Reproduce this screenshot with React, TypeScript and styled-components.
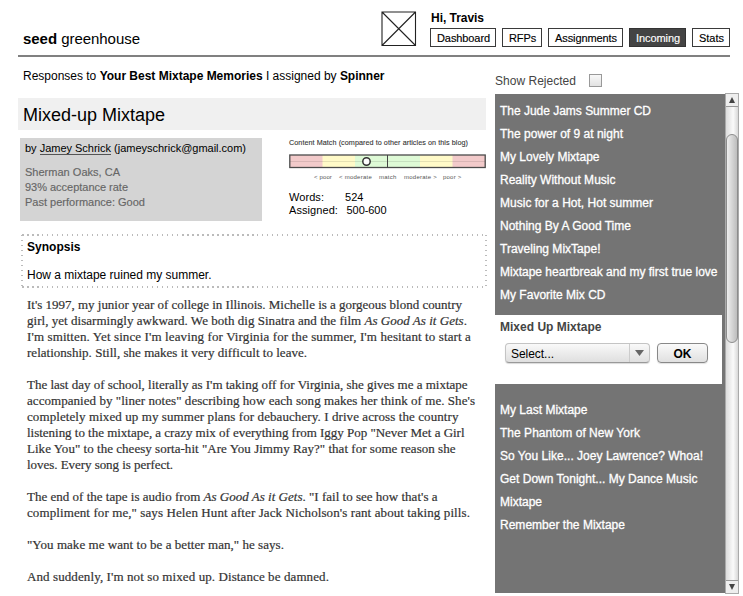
import React, { useLayoutEffect, useRef, useState } from "react";
import styled, { createGlobalStyle, css } from "styled-components";

const GlobalStyle = createGlobalStyle`
  * { box-sizing: border-box; }
  body { margin: 0; background: #fff; overflow: hidden; }
`;

const Page = styled.div`
  width: 743px;
  height: 596px;
  overflow: hidden;
  background: #fff;
  color: #000;
  font-family: "Liberation Sans", Arial, sans-serif;
  font-size: 12px;
  line-height: 16px;
  white-space: nowrap;
`;

const FitSpan = styled.span`
  display: inline-block;
  white-space: pre;
`;

/* Tracks a run of text so that it fills the given measure. */
function Fit({ w, children }: { w: number; children: React.ReactNode }) {
  const ref = useRef<HTMLSpanElement>(null);
  const [spacing, setSpacing] = useState(0);
  useLayoutEffect(() => {
    const el = ref.current;
    if (!el) return;
    const count = (el.textContent || "").length;
    el.style.letterSpacing = "0px";
    const next = (w - el.getBoundingClientRect().width) / Math.max(1, count);
    el.style.letterSpacing = `${next}px`;
    setSpacing(next);
  }, [w, children]);
  return (
    <FitSpan ref={ref} style={{ letterSpacing: spacing }}>
      {children}
    </FitSpan>
  );
}

const Header = styled.header`
  display: flex;
  width: 712px;
  height: 57px;
  margin-left: 18px;
  border-bottom: 2px solid #808080;
`;

const Logo = styled.h1`
  width: 363px;
  margin: 0;
  padding: 29px 0 0 5px;
  font-size: 15px;
  font-weight: 400;
  line-height: 20px;
`;

const Avatar = styled.svg`
  display: block;
  width: 36px;
  height: 36px;
  margin-top: 11px;
  flex: none;
`;

const Account = styled.div`
  margin-left: 13px;
  padding-top: 10px;
`;

const Greeting = styled.div`
  height: 18px;
  padding-left: 1px;
  font-weight: 700;
`;

const Nav = styled.nav`
  display: flex;
  gap: 6px;
`;

const NavButton = styled.button<{ $w: number; $active?: boolean }>`
  width: ${(p) => p.$w}px;
  height: 19px;
  padding: 0 0 0 1px;
  border: 1.5px solid ${(p) => (p.$active ? "#333" : "#3a3a3a")};
  background: ${(p) => (p.$active ? "#444" : "#fff")};
  color: ${(p) => (p.$active ? "#fff" : "#000")};
  font: 11px/16px "Liberation Sans", Arial, sans-serif;
  -webkit-text-stroke: 0.15px currentColor;
  white-space: nowrap;
  text-align: center;
`;

const Columns = styled.div`
  display: flex;
`;

const Main = styled.main`
  width: 495px;
`;

const Intro = styled.p`
  height: 41px;
  margin: 0;
  padding: 11px 0 0 23px;
`;

const TitleBar = styled.h2`
  width: 468px;
  height: 32px;
  margin: 0 0 0 18px;
  padding-left: 5px;
  background: #f0f0f0;
  font-size: 18px;
  font-weight: 400;
  line-height: 34px;
`;

const Details = styled.div`
  display: flex;
  height: 83px;
  margin: 8px 0 0 20px;
`;

const Author = styled.section`
  width: 242px;
  height: 83px;
  padding: 3px 0 0 5px;
  background: #d4d4d4;
  font-size: 11px;
  line-height: 15px;
`;

const Name = styled.a`
  border-bottom: 1px solid #555;
  display: inline-block;
  line-height: 12px;
`;

const Facts = styled.div`
  margin-top: 9px;
  color: #666;
  -webkit-text-stroke: 0.15px #666;
`;

const Match = styled.section`
  width: 198px;
  margin-left: 27px;
  font-size: 11px;
  line-height: 13px;
`;

const MatchTitle = styled.div`
  height: 16px;
  font-size: 7.2px;
  line-height: 9px;
  color: #333;
  -webkit-text-stroke: 0.1px #333;
`;

const Meter = styled.svg`
  display: block;
  width: 198px;
  height: 15px;
`;

const Scale = styled.div`
  display: grid;
  grid-template-columns: 25px 40px 25px 39px 24px;
  justify-items: start;
  height: 22px;
  padding: 4px 0 0 25px;
  font-size: 6px;
  line-height: 8px;
  color: #555;
`;

const Count = styled.div<{ $label: number }>`
  display: grid;
  grid-template-columns: ${(p) => p.$label}px auto;
`;

const dots = css`
  background:
    repeating-linear-gradient(90deg, #bbb 0 1.5px, transparent 1.5px 5px) 1px 0 / 100% 2px no-repeat,
    repeating-linear-gradient(90deg, #bbb 0 1.5px, transparent 1.5px 5px) 1px 100% / 100% 2px no-repeat,
    repeating-linear-gradient(180deg, #bbb 0 1.5px, transparent 1.5px 5px) 0 1px / 2px 100% no-repeat,
    repeating-linear-gradient(180deg, #bbb 0 1.5px, transparent 1.5px 5px) 100% 1px / 2px 100% no-repeat;
`;

const Synopsis = styled.section`
  ${dots}
  width: 466px;
  height: 54px;
  margin: 13px 0 0 21px;
  padding: 5px 0 0 6px;
`;

const SynopsisTitle = styled.h3`
  margin: 0 0 12px;
  font-size: 12px;
  line-height: 16px;
`;

const Article = styled.article`
  padding: 9px 0 0 27px;
  font-family: "Liberation Serif", "Times New Roman", serif;
  font-size: 13px;
  line-height: 16px;
  color: #333;
  -webkit-text-stroke: 0.2px #333;
`;

const Paragraph = styled.p`
  margin: 0 0 16px;
`;

const Line = styled.span`
  display: block;
  height: 16px;
`;

const Side = styled.aside`
  width: 248px;
`;

const Filter = styled.label`
  display: flex;
  align-items: flex-start;
  height: 36px;
  padding-top: 16px;
  gap: 13px;
  color: #444;
`;

const Check = styled.span`
  width: 13px;
  height: 13px;
  margin-top: 1px;
  border: 1px solid #999;
  background: linear-gradient(#f8f8f8, #e2e2e2);
`;

const Panel = styled.div`
  display: flex;
`;

const List = styled.div`
  width: 230px;
  height: 499px;
  margin-top: 1px;
  background: #747474;
`;

const Items = styled.ul<{ $h: number; $top: number }>`
  height: ${(p) => p.$h}px;
  margin: 0;
  padding: ${(p) => p.$top}px 0 0 5px;
  list-style: none;
  color: #fff;
  -webkit-text-stroke: 0.3px #fff;
`;

const Item = styled.li`
  height: 23px;
  line-height: 22px;
`;

const Current = styled.section`
  width: 227px;
  height: 69px;
  padding: 4px 0 0 5px;
  background: #fff;
`;

const CurrentTitle = styled.h4`
  margin: 0 0 8px;
  font-size: 12px;
  line-height: 16px;
  color: #444;
`;

const Controls = styled.div`
  display: flex;
  gap: 7px;
  padding-left: 5px;
`;

const Select = styled.div`
  display: flex;
  width: 145px;
  height: 20px;
  border: 1px solid #c4c4c4;
  border-bottom-color: #999;
  border-radius: 4px;
  background: linear-gradient(#f9f9f9, #dfdfdf);
  box-shadow: 0 1px 1px rgba(0, 0, 0, 0.15);
  line-height: 20px;
`;

const SelectText = styled.span`
  flex: 1;
  padding-left: 5px;
`;

const SelectArrow = styled.span`
  display: flex;
  width: 20px;
  align-items: center;
  justify-content: center;
  border-left: 1px solid #ccc;
`;

const Ok = styled.button`
  width: 51px;
  height: 20px;
  padding: 1px 0 0;
  border: 1px solid #888;
  border-radius: 4px;
  background: linear-gradient(#fafafa, #e0e0e0);
  box-shadow: 0 1px 1px rgba(0, 0, 0, 0.12);
  color: #000;
  font: 700 12px/16px "Liberation Sans", Arial, sans-serif;
`;

const Scrollbar = styled.div`
  display: flex;
  flex-direction: column;
  width: 14px;
  height: 501px;
  border: 1px solid #aaa;
  background: linear-gradient(90deg, #dcdcdc, #fafafa 60%, #d8d8d8);
`;

const Arrow = styled.div<{ $end?: boolean }>`
  display: flex;
  height: 13px;
  align-items: center;
  justify-content: center;
  background: #eee;
  border: 0 solid #999;
  border-width: ${(p) => (p.$end ? "1px 0 0" : "0 0 1px")};
`;

const Track = styled.div`
  flex: 1;
  padding-top: 27px;
`;

const Thumb = styled.div`
  height: 209px;
  border: 1px solid #8c8c8c;
  border-radius: 6px;
  background: linear-gradient(90deg, #eee, #d8d8d8 45%, #bdbdbd);
`;

const Triangle = ({ up, size = 6 }: { up?: boolean; size?: number }) => (
  <svg width={size} height={6} viewBox="0 0 10 10" preserveAspectRatio="none">
    <path d={up ? "M5 0 10 10H0z" : "M0 0H10L5 10z"} fill={size > 6 ? "#666" : "#444"} />
  </svg>
);

const nav = [
  { label: "Dashboard", w: 66, text: 53 },
  { label: "RFPs", w: 40, text: 27 },
  { label: "Assignments", w: 75, text: 62 },
  { label: "Incoming", w: 57, text: 44, active: true },
  { label: "Stats", w: 38, text: 25 },
];

const before: [string, number][] = [
  ["The Jude Jams Summer CD", 151],
  ["The power of 9 at night", 123],
  ["My Lovely Mixtape", 99.5],
  ["Reality Without Music", 115.5],
  ["Music for a Hot, Hot summer", 153],
  ["Nothing By A Good Time", 131],
  ["Traveling MixTape!", 100.5],
  ["Mixtape heartbreak and my first true love", 217.5],
  ["My Favorite Mix CD", 105.5],
];

const after: [string, number][] = [
  ["My Last Mixtape", 87.5],
  ["The Phantom of New York", 140],
  ["So You Like... Joey Lawrence? Whoa!", 203],
  ["Get Down Tonight... My Dance Music", 197.5],
  ["Mixtape", 42],
  ["Remember the Mixtape", 125],
];

const film = <em>As Good As it Gets</em>;

const story: [React.ReactNode, number][][] = [
  [
    ["It's 1997, my junior year of college in Illinois. Michelle is a gorgeous blond country", 435],
    [<>girl, yet disarmingly awkward. We both dig Sinatra and the film {film}.</>, 440],
    ["I'm smitten. Yet since I'm leaving for Virginia for the summer, I'm hesitant to start a", 444],
    ["relationship. Still, she makes it very difficult to leave.", 280],
  ],
  [
    ["The last day of school, literally as I'm taking off for Virginia, she gives me a mixtape", 440.5],
    ['accompanied by "liner notes" describing how each song makes her think of me. She\'s', 448],
    ["completely mixed up my summer plans for debauchery. I drive across the country", 431.5],
    ['listening to the mixtape, a crazy mix of everything from Iggy Pop "Never Met a Girl', 437.5],
    ['Like You" to the cheesy sorta-hit "Are You Jimmy Ray?" that for some reason she', 428.5],
    ["loves. Every song is perfect.", 146],
  ],
  [
    [<>The end of the tape is audio from {film}. "I fail to see how that's a</>, 410.5],
    ['compliment for me," says Helen Hunt after Jack Nicholson\'s rant about taking pills.', 443],
  ],
  [['"You make me want to be a better man," he says.', 257]],
  [["And suddenly, I'm not so mixed up. Distance be damned.", 302]],
];

const bands = ["#f2caca", "#fffac8", "#defad6", "#defad6", "#fffac8", "#f2caca"];

function ContentMeter() {
  return (
    <Meter viewBox="0 0 198 15">
      {bands.map((c, i) => (
        <rect key={i} x={1 + i * 32.5} y="1" width="33" height="13" fill={c} />
      ))}
      <path d="M1 7.5H196" stroke="#000" strokeOpacity=".1" />
      <rect x="0.8" y="1" width="195.4" height="12.5" fill="none" stroke="#4b4b4b" strokeWidth="1.3" />
      <path d="M98.5 1V14" stroke="#444" />
      <circle cx="77.5" cy="7.5" r="3.7" fill="#fff" stroke="#333" strokeWidth="1.5" />
    </Meter>
  );
}

function Titles({ items }: { items: [string, number][] }) {
  return (
    <>
      {items.map(([t, w]) => (
        <Item key={t}>
          <Fit w={w}>{t}</Fit>
        </Item>
      ))}
    </>
  );
}

export default function App() {
  return (
    <Page>
      <GlobalStyle />
      <Header>
        <Logo>
          <Fit w={117}>
            <b>seed</b> greenhouse
          </Fit>
        </Logo>
        <Avatar viewBox="0 0 36 36">
          <path d="M1 1H34.5V34.5H1zM1 1 34.5 34.5M34.5 1 1 34.5" fill="none" stroke="#222" strokeWidth="1.1" />
        </Avatar>
        <Account>
          <Greeting>
            <Fit w={53}>Hi, Travis</Fit>
          </Greeting>
          <Nav>
            {nav.map((n) => (
              <NavButton key={n.label} $w={n.w} $active={n.active}>
                <Fit w={n.text}>{n.label}</Fit>
              </NavButton>
            ))}
          </Nav>
        </Account>
      </Header>
      <Columns>
        <Main>
          <Intro>
            <Fit w={361.5}>
              Responses to <b>Your Best Mixtape Memories</b> I assigned by <b>Spinner</b>
            </Fit>
          </Intro>
          <TitleBar>
            <Fit w={142}>Mixed-up Mixtape</Fit>
          </TitleBar>
          <Details>
            <Author>
              <Fit w={221}>
                by <Name>Jamey Schrick</Name> (jameyschrick@gmail.com)
              </Fit>
              <Facts>
                <div><Fit w={95}>Sherman Oaks, CA</Fit></div>
                <div><Fit w={103}>93% acceptance rate</Fit></div>
                <div><Fit w={120}>Past performance: Good</Fit></div>
              </Facts>
            </Author>
            <Match>
              <MatchTitle>
                <Fit w={179}>Content Match (compared to other articles on this blog)</Fit>
              </MatchTitle>
              <ContentMeter />
              <Scale>
                <Fit w={18}>{"< poor"}</Fit>
                <Fit w={33}>{"< moderate"}</Fit>
                <Fit w={17.5}>match</Fit>
                <Fit w={33}>{"moderate >"}</Fit>
                <Fit w={18.5}>{"poor >"}</Fit>
              </Scale>
              <Count $label={56}>
                <span><Fit w={35}>Words:</Fit></span>
                <span><Fit w={18.5}>524</Fit></span>
              </Count>
              <Count $label={57.5}>
                <span><Fit w={49}>Assigned:</Fit></span>
                <span><Fit w={40}>500-600</Fit></span>
              </Count>
            </Match>
          </Details>
          <Synopsis>
            <SynopsisTitle>
              <Fit w={53.5}>Synopsis</Fit>
            </SynopsisTitle>
            <Fit w={184.5}>How a mixtape ruined my summer.</Fit>
          </Synopsis>
          <Article>
            {story.map((lines, i) => (
              <Paragraph key={i}>
                {lines.map(([text, w], j) => (
                  <Line key={j}>
                    <Fit w={w}>{text}</Fit>
                  </Line>
                ))}
              </Paragraph>
            ))}
          </Article>
        </Main>
        <Side>
          <Filter>
            <Fit w={81}>Show Rejected</Fit>
            <Check />
          </Filter>
          <Panel>
            <List>
              <Items $h={221} $top={6}>
                <Titles items={before} />
              </Items>
              <Current>
                <CurrentTitle>
                  <Fit w={101.5}>Mixed Up Mixtape</Fit>
                </CurrentTitle>
                <Controls>
                  <Select>
                    <SelectText>
                      <Fit w={43}>Select...</Fit>
                    </SelectText>
                    <SelectArrow>
                      <Triangle size={9} />
                    </SelectArrow>
                  </Select>
                  <Ok>OK</Ok>
                </Controls>
              </Current>
              <Items $h={209} $top={15}>
                <Titles items={after} />
              </Items>
            </List>
            <Scrollbar>
              <Arrow>
                <Triangle up />
              </Arrow>
              <Track>
                <Thumb />
              </Track>
              <Arrow $end>
                <Triangle />
              </Arrow>
            </Scrollbar>
          </Panel>
        </Side>
      </Columns>
    </Page>
  );
}
